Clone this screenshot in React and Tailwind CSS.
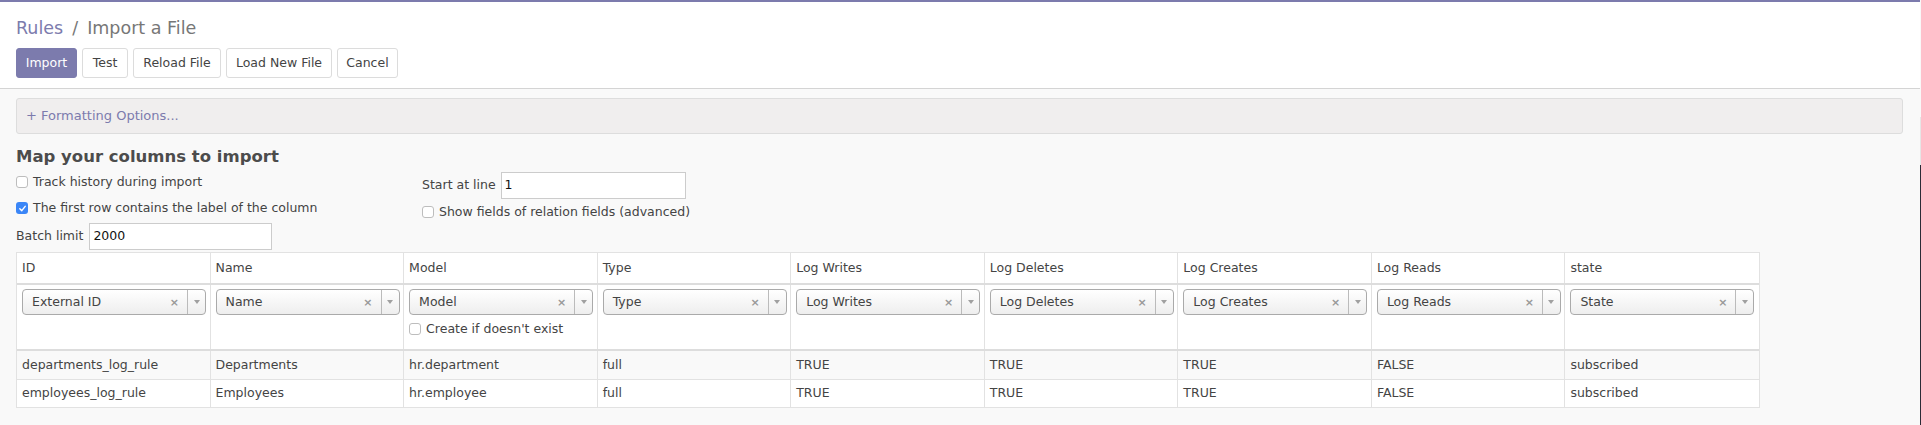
import React from 'react'

const COLUMNS = [
  { head: 'ID', field: 'External ID' },
  { head: 'Name', field: 'Name' },
  { head: 'Model', field: 'Model', create: true },
  { head: 'Type', field: 'Type' },
  { head: 'Log Writes', field: 'Log Writes' },
  { head: 'Log Deletes', field: 'Log Deletes' },
  { head: 'Log Creates', field: 'Log Creates' },
  { head: 'Log Reads', field: 'Log Reads' },
  { head: 'state', field: 'State' },
]

const ROWS = [
  ['departments_log_rule', 'Departments', 'hr.department', 'full', 'TRUE', 'TRUE', 'TRUE', 'FALSE', 'subscribed'],
  ['employees_log_rule', 'Employees', 'hr.employee', 'full', 'TRUE', 'TRUE', 'TRUE', 'FALSE', 'subscribed'],
]

function Checkbox({ checked }) {
  if (checked) {
    return (
      <span className="w-[12px] h-[12px] rounded-[3px] bg-[#3b86f7] flex items-center justify-center shrink-0">
        <svg width="9" height="9" viewBox="0 0 10 10">
          <path d="M2 5.2 L4.2 7.4 L8 2.6" fill="none" stroke="white" strokeWidth="1.6" strokeLinecap="round" strokeLinejoin="round" />
        </svg>
      </span>
    )
  }
  return <span className="w-[12px] h-[12px] rounded-[3px] border border-[#bdbdbd] bg-white shrink-0" />
}

function CheckRow({ checked, label, className = '' }) {
  return (
    <div className={`flex items-center gap-[5px] h-[20px] ${className}`}>
      <Checkbox checked={checked} />
      <span>{label}</span>
    </div>
  )
}

function FieldSelect({ value }) {
  return (
    <div className="w-[184px] h-[26px] rounded-[4px] border border-[#aaaaaa] bg-linear-to-b from-white to-[#eeeeee] flex items-center text-[#444]">
      <span className="flex-1 pl-[9px] truncate">{value}</span>
      <span className="text-[11px] font-bold text-[#999] mr-[8px] leading-none">×</span>
      <span className="w-[18px] h-full border-l border-[#bbbbbb] flex items-center justify-center">
        <svg width="6" height="5" viewBox="0 0 6 5">
          <path d="M0 0 L6 0 L3 4 Z" fill="#a0a0a0" />
        </svg>
      </span>
    </div>
  )
}

function Btn({ children, primary, w }) {
  return (
    <button
      className={`h-[30px] rounded-[3px] border text-[12.5px] ${w} ${
        primary ? 'bg-[#7c7bad] border-[#7c7bad] text-white' : 'bg-white border-[#dcdcdc] text-[#444]'
      }`}
    >
      {children}
    </button>
  )
}

export default function App() {
  return (
    <div className="w-[1921px] h-[425px] overflow-hidden flex font-['DejaVu_Sans',sans-serif] text-[12.5px] text-[#444]">
      <div className="w-[1920px] h-full bg-[#f9f9f9]">
        <div className="bg-white border-t-2 border-[#7c7bad] border-b border-b-[#d4d4d4] pt-[14px] pb-[10px] px-[16px]">
          <div className="h-[24px] leading-[24px] text-[17.5px] flex items-center">
            <span className="text-[#7c7bad]">Rules</span>
            <span className="text-[#777] mx-[9px]">/</span>
            <span className="text-[#777]">Import a File</span>
          </div>
          <div className="flex gap-[5px] mt-[8px]">
            <Btn primary w="w-[61px]">Import</Btn>
            <Btn w="w-[46px]">Test</Btn>
            <Btn w="w-[88px]">Reload File</Btn>
            <Btn w="w-[106px]">Load New File</Btn>
            <Btn w="w-[61px]">Cancel</Btn>
          </div>
        </div>

        <div className="pl-[16px] pr-[17px]">
          <div className="mt-[9px] h-[36px] rounded-[3px] border border-[#dddddd] bg-[#f0eeee] flex items-center pl-[9px] text-[#7c7bad] text-[13px]">
            + Formatting Options...
          </div>

          <h2 className="mt-[13px] text-[16.5px] leading-[20px] font-bold text-[#4c4c4c]">Map your columns to import</h2>

          <div className="flex mt-[5px]">
            <div className="w-[406px]">
              <CheckRow label="Track history during import" />
              <CheckRow checked label="The first row contains the label of the column" className="mt-[6px]" />
              <div className="flex items-center mt-[5px] gap-[6px]">
                <span>Batch limit</span>
                <div className="w-[183px] h-[27px] border border-[#cccccc] bg-white flex items-center pl-[3px] text-[#111]">2000</div>
              </div>
            </div>
            <div>
              <div className="flex items-center gap-[5px]">
                <span>Start at line</span>
                <div className="w-[185px] h-[27px] border border-[#cccccc] bg-white flex items-center pl-[3px] text-[#111]">1</div>
              </div>
              <CheckRow label="Show fields of relation fields (advanced)" className="mt-[3px]" />
            </div>
          </div>

          <div className="mt-[2px] w-[1744px] border border-[#e2e2e2] bg-white">
            <div className="grid grid-cols-9 h-[32px] border-b-2 border-[#dddddd]">
              {COLUMNS.map((c, i) => (
                <div key={c.head} className={`px-[5px] flex items-center ${i < 8 ? 'border-r border-[#e2e2e2]' : ''}`}>
                  {c.head}
                </div>
              ))}
            </div>
            <div className="grid grid-cols-9 h-[66px] border-b-2 border-[#dddddd]">
              {COLUMNS.map((c, i) => (
                <div key={c.head} className={`px-[5px] pt-[4px] ${i < 8 ? 'border-r border-[#e2e2e2]' : ''}`}>
                  <FieldSelect value={c.field} />
                  {c.create && <CheckRow label="Create if doesn't exist" className="mt-[4px]" />}
                </div>
              ))}
            </div>
            {ROWS.map((row, r) => (
              <div
                key={r}
                className={`grid grid-cols-9 ${r === 0 ? 'h-[29px] bg-[#f9f9f9] border-b border-[#e2e2e2]' : 'h-[27px] bg-white'}`}
              >
                {row.map((v, i) => (
                  <div key={i} className={`px-[5px] flex items-center ${i < 8 ? 'border-r border-[#e2e2e2]' : ''}`}>
                    {v}
                  </div>
                ))}
              </div>
            ))}
          </div>
        </div>
      </div>
      <div className="w-[1px] h-full flex flex-col">
        <div className="h-[117px] bg-[#f9f9f9]" />
        <div className="h-[48px] bg-[#e6e6e6]" />
        <div className="flex-1 bg-[#2b2b36]" />
      </div>
    </div>
  )
}
